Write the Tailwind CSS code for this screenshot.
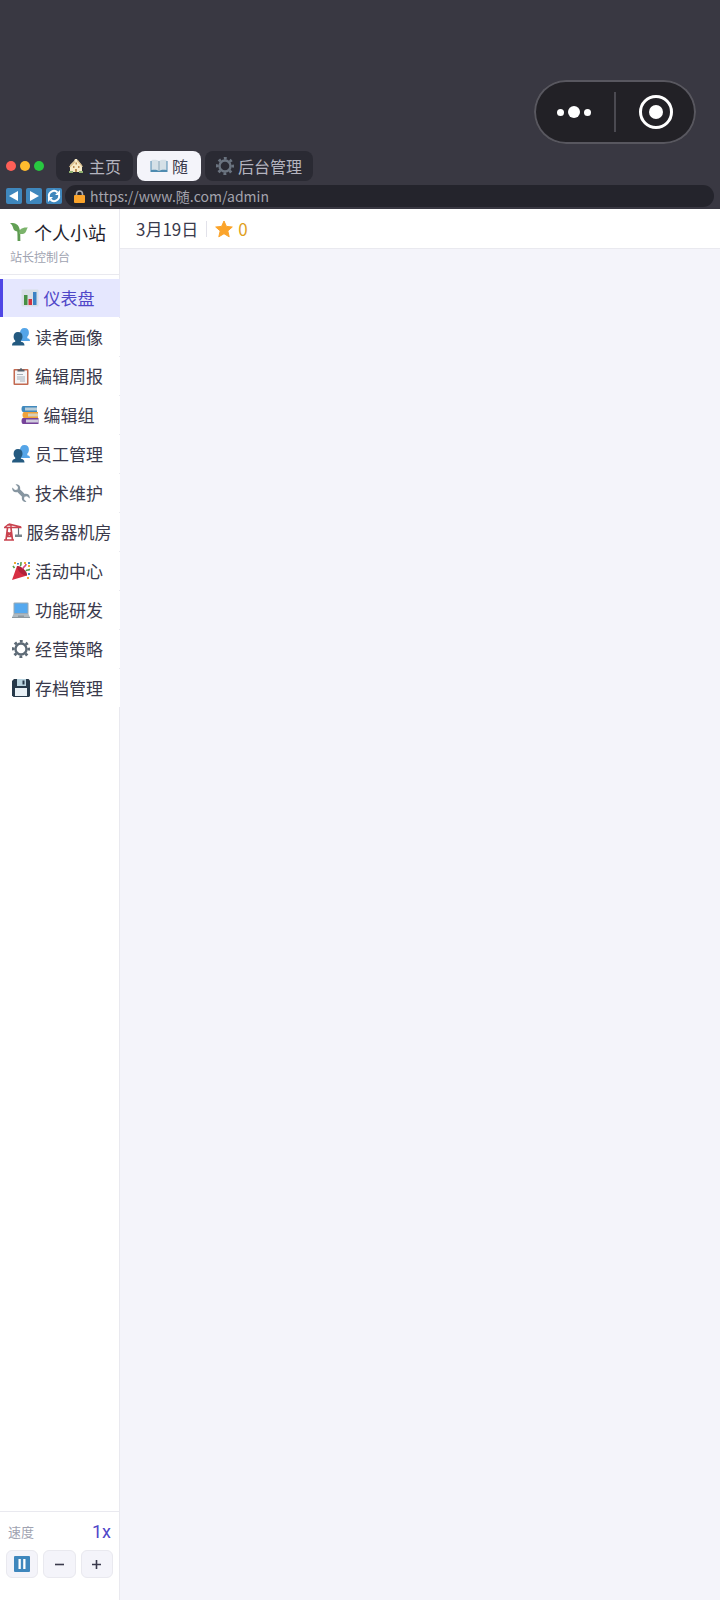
<!DOCTYPE html>
<html lang="zh-CN">
<head>
    <meta charset="UTF-8">
    <meta name="viewport" content="width=device-width, initial-scale=1.0">
    <title>个人小站 - 站长控制台</title>
    <script src="https://cdn.jsdelivr.net/npm/@tailwindcss/browser@4"></script>
</head>
<body class="flex min-h-screen flex-col bg-[#f4f4fa] font-['Noto_Sans_CJK_SC',sans-serif] text-[17px] text-[#3a3a4c]">
    <!-- Shared icons -->
    <svg class="hidden" aria-hidden="true">
        <symbol id="gear" viewBox="0 0 18 18">
            <g fill="none" stroke="currentColor">
                <circle cx="9" cy="9" r="5.500" stroke-width="2.400"/>
                <circle cx="9" cy="9" r="7.700" stroke-width="2.600" stroke-dasharray="2.8 3.247" transform="rotate(-10 9 9)"/>
            </g>
        </symbol>
        <symbol id="people" viewBox="0 0 18 18">
            <path fill="#55a5e8" d="M12.500 0c3 0 4.500 2 4.400 4.800 0 2-.8 3.200-1.600 4v1.400c1.500.3 2.700.9 2.700 2.800H8V5C8 2 9.500 0 12.500 0z"/>
            <path fill="#245a80" d="M6 4c3 0 4.600 2 4.500 4.700 0 1.900-.8 3-1.600 3.900v1.200c1.900.4 3.600 1 3.600 3.700H0c0-2.600 1.300-3.300 3.200-3.800v-1.100C2.200 11.700 1.600 10.500 1.600 8.700 1.600 6 3.200 4 6 4z"/>
        </symbol>
    </svg>

    <!-- Browser chrome -->
    <header class="flex flex-col bg-[#393842] px-[6px] pb-[2px]">
        <div class="flex justify-end pt-20 pr-[18px]">
            <div class="flex h-16 w-[162px] items-center rounded-full bg-[#222126] ring-2 ring-[#58575f] ring-inset">
                <button class="flex flex-1 items-center justify-center gap-1" aria-label="更多">
                    <span class="size-[7px] rounded-full bg-white"></span>
                    <span class="size-3 rounded-full bg-white"></span>
                    <span class="size-[7px] rounded-full bg-white"></span>
                </button>
                <span class="h-10 w-[2px] bg-[#4b4a51]"></span>
                <button class="flex flex-1 items-center justify-center" aria-label="关闭">
                    <span class="flex size-[34px] items-center justify-center rounded-full border-[3px] border-white">
                        <span class="size-[14px] rounded-full bg-white"></span>
                    </span>
                </button>
            </div>
        </div>
        <div class="mt-[7px] flex items-center gap-1 text-[16px] leading-[30px] text-[#b4b4bf]">
            <div class="mr-2 flex gap-1">
                <span class="size-[10px] rounded-full bg-[#fe5f57]"></span>
                <span class="size-[10px] rounded-full bg-[#febb2e]"></span>
                <span class="size-[10px] rounded-full bg-[#28c840]"></span>
            </div>
            <button class="flex items-center gap-[5px] rounded-lg bg-[#2a2a33] px-3">
                <svg class="size-4" viewBox="0 0 16 16" aria-hidden="true">
                    <path fill="#f7ebc8" d="M2 7l4-4 1-2h2l1 2 3 3 1 2v6H2z"/>
                    <path fill="#d8bd8c" d="M1 8.500L6.500 3l1 1L2 9.500zM9 3l1-1 5 6.500-1 .5z"/>
                    <path fill="#b98b55" d="M7.500 4.500H9v2H7.500zM5 8h1.500v2H5zM10 8h1.500v2H10zM7 11h2v3H7z"/>
                    <path fill="#8fb070" d="M1 13h4v2H1zM11 13h4v2h-4z"/>
                </svg>
                主页
            </button>
            <button class="flex items-center gap-1 rounded-lg bg-[#f4f4fa] px-[13px] text-[#3a3a4c]">
                <svg class="h-4 w-[18px]" viewBox="0 0 18 16" aria-hidden="true">
                    <path fill="#4e8bb0" d="M.5 3h17v11H.5z"/>
                    <path fill="#d5e0e7" d="M1.500 2c3.500-.6 5.500-.3 7.500 1 2-1.300 4-1.600 7.500-1v10c-3.500-.5-5.500-.2-7.500 1-2-1.200-4-1.500-7.500-1z"/>
                    <path fill="none" stroke="#8aa6b8" d="M9 3v10"/>
                </svg>
                随
            </button>
            <button class="flex items-center gap-1 rounded-lg bg-[#2a2a33] px-[11px]">
                <svg class="size-[18px] text-[#6b7480]" aria-hidden="true"><use href="#gear"/></svg>
                后台管理
            </button>
        </div>
        <div class="mt-1 flex items-center">
            <div class="flex w-[59px] gap-1">
                <button class="size-4 rounded-xs bg-[#3f87bd]" aria-label="后退">
                    <svg class="size-4" viewBox="0 0 16 16"><path fill="#fff" d="M3 8l9-5v10z"/></svg>
                </button>
                <button class="size-4 rounded-xs bg-[#3f87bd]" aria-label="前进">
                    <svg class="size-4" viewBox="0 0 16 16"><path fill="#fff" d="M13 8L4 3v10z"/></svg>
                </button>
                <button class="size-4 rounded-xs bg-[#3f87bd]" aria-label="刷新">
                    <svg class="size-4" viewBox="0 0 16 16">
                        <path fill="none" stroke="#fff" stroke-width="2" d="M3 9A5 5 0 0 1 11.500 4.500M13 7A5 5 0 0 1 4.500 11.500"/>
                        <path fill="#fff" d="M9 7h5V2zM7 9H2v5z"/>
                    </svg>
                </button>
            </div>
            <div class="flex h-[22px] flex-1 items-center gap-[5px] rounded-full bg-[#24242c] pl-[9px]">
                <svg class="h-[13px] w-[11px]" viewBox="0 0 11 13" aria-hidden="true">
                    <path fill="none" stroke="#a9a9ad" stroke-width="1.600" d="M2.500 6V4a3 3 0 0 1 6 0v2"/>
                    <rect y="5" width="11" height="8" rx="1" fill="#fba42b"/>
                </svg>
                <input type="text" value="https://www.随.com/admin" aria-label="地址" class="min-w-0 flex-1 bg-transparent text-[14px] leading-[22px] text-[#a3a3ad] outline-none">
            </div>
        </div>
    </header>

    <div class="flex flex-1">
        <!-- Sidebar -->
        <aside class="flex w-[120px] shrink-0 flex-col border-r border-[#e9e9ef] bg-white">
            <div class="border-b border-[#e9e9ef] px-[10px] pt-[11px] pb-2">
                <h1 class="flex items-center gap-[6px] text-[18px] leading-6 whitespace-nowrap text-[#1f1f2e]">
                    <svg class="size-[18px] shrink-0" viewBox="0 0 18 18" aria-hidden="true">
                        <path fill="none" stroke="#5d9a51" stroke-width="2.800" d="M9 18c-.3-4 .2-7-.5-10.500"/>
                        <path fill="#62a054" d="M0 0c6-.5 9.500 2 10 8.500-4.500.5-6.500-1-7-4C2.500 2.500 1.500 1.500 0 0z"/>
                        <path fill="#7bb36b" d="M9 11c0-5 3-7 9-6.500-1.500 1-1.500 6-5 6.500-1.500.2-3 0-4 0z"/>
                    </svg>
                    个人小站
                </h1>
                <p class="mt-1 text-[12px] leading-[18px] text-[#a0a3b1]">站长控制台</p>
            </div>
            <nav class="-mr-px mt-1 flex flex-1 flex-col gap-px leading-[38px] whitespace-nowrap">
                <a href="#" class="flex h-[38px] items-center justify-center gap-[5px] border-l-[3px] border-[#4f46e5] bg-[#e5e7fe] pr-2 text-[#4f46c8]">
                    <svg class="size-[18px] shrink-0" viewBox="0 0 18 18" aria-hidden="true">
                        <rect x=".5" y=".5" width="17" height="17" rx="1" fill="#d8dfe6"/>
                        <path fill="#469044" d="M3 6h3.500v10H3z"/><path fill="#d3343f" d="M7.500 10H11v6H7.500z"/><path fill="#3b82c4" d="M12 3h3.500v13H12z"/>
                    </svg>
                    仪表盘
                </a>
                <a href="#" class="flex h-[38px] items-center justify-center gap-[5px] border-l-[3px] border-white bg-white pr-2">
                    <svg class="size-[18px] shrink-0" aria-hidden="true"><use href="#people"/></svg>
                    读者画像
                </a>
                <a href="#" class="flex h-[38px] items-center justify-center gap-[5px] border-l-[3px] border-white bg-white pr-2">
                    <svg class="size-[18px] shrink-0" viewBox="0 0 18 18" aria-hidden="true">
                        <rect x="1.500" y="2" width="15" height="16" rx="1" fill="#c36a51"/>
                        <path fill="#f4f5f7" d="M3 3.500h12v13H3z"/>
                        <path fill="#56616b" d="M5.500 4.500v-2h2.300a1.200 1.200 0 0 1 2.400 0h2.300v2z"/>
                        <path stroke="#a7b1ba" d="M5 7.500h6M5 10h8M5 12h8M8 14h5"/>
                    </svg>
                    编辑周报
                </a>
                <a href="#" class="flex h-[38px] items-center justify-center gap-[5px] border-l-[3px] border-white bg-white pr-2">
                    <svg class="size-[18px] shrink-0" viewBox="0 0 18 18" aria-hidden="true">
                        <path fill="#4089bd" d="M2 0h14v6H2C0 6 0 0 2 0z"/><path fill="#b9cdd8" d="M4 1.500h12v3H4z"/>
                        <path fill="#f0a23a" d="M3 6h14v6H3c-2 0-2-6 0-6z"/><path fill="#d9cfb4" d="M7 7.500h10v3H7z"/>
                        <path fill="#76439a" d="M2 12h15.500v6H2c-2 0-2-6 0-6z"/><path fill="#cfcbdc" d="M5 13.500h12.500v3H5z"/>
                    </svg>
                    编辑组
                </a>
                <a href="#" class="flex h-[38px] items-center justify-center gap-[5px] border-l-[3px] border-white bg-white pr-2">
                    <svg class="size-[18px] shrink-0" aria-hidden="true"><use href="#people"/></svg>
                    员工管理
                </a>
                <a href="#" class="flex h-[38px] items-center justify-center gap-[5px] border-l-[3px] border-white bg-white pr-2">
                    <svg class="size-[18px] shrink-0" viewBox="0 0 18 18" aria-hidden="true">
                        <path fill="#8796a1" d="M3.500.3C6.500-.3 9 2.300 8 5.300l4.700 4.700c3-1 5.600 1.500 5 4.500l-2.700-2.300-2.600.5-.4 2.500 2.500 2.600c-3 .6-5.500-2-4.500-5L5.300 8.100c-3 1-5.700-1.500-5-4.600L3 6l2.500-.5L6 3z"/>
                    </svg>
                    技术维护
                </a>
                <a href="#" class="flex h-[38px] items-center justify-center gap-[5px] border-l-[3px] border-white bg-white pr-2">
                    <svg class="size-[18px] shrink-0" viewBox="0 0 18 18" aria-hidden="true">
                        <path fill="none" stroke="#c9434f" stroke-width="1.700" d="M3.500 5L2 17M7 5l1.500 12M3 9l5 4M7.500 9l-5 4M2 13.500h6.500M0 17h10"/>
                        <path fill="none" stroke="#c9434f" stroke-width="1.400" d="M0 4.500h17.500M5 1l12 3M5 1L1 4M3 2h4v3"/>
                        <path fill="none" stroke="#66717a" stroke-width="1.200" d="M14.500 5v7"/>
                        <path fill="#7b868e" d="M11 11.500h7V14h-7z"/>
                    </svg>
                    服务器机房
                </a>
                <a href="#" class="flex h-[38px] items-center justify-center gap-[5px] border-l-[3px] border-white bg-white pr-2">
                    <svg class="size-[18px] shrink-0" viewBox="0 0 18 18" aria-hidden="true">
                        <path fill="#d72f43" d="M5 4c5 1 9 5 10 9.500L0 18z"/>
                        <path fill="#b02339" d="M5 4c4-.5 11 6 10 9.500-5 0-10-5-10-9.500z"/>
                        <path fill="none" stroke="#559b4b" stroke-width="1.600" d="M8 4c2-1 0-3 1.500-4M14 9c1-2 2.500 0 4-2M1 4l1.500 2"/>
                        <path fill="none" stroke="#d14c85" stroke-width="1.600" d="M11 7c0-3 3-2 3-5"/>
                        <path fill="#edaa35" d="M2 0h2v2H2zM16 3h2v2h-2zM12 0h2v2h-2zM15 15h2v2h-2z"/>
                        <path fill="#438cc7" d="M5 1h2v1.500H5zM16 0h2v2h-2zM16 11h2v2h-2z"/>
                    </svg>
                    活动中心
                </a>
                <a href="#" class="flex h-[38px] items-center justify-center gap-[5px] border-l-[3px] border-white bg-white pr-2">
                    <svg class="size-[18px] shrink-0" viewBox="0 0 18 18" aria-hidden="true">
                        <rect x="1.500" y="1.500" width="15" height="12" rx="1" fill="#9aa9b4"/>
                        <path fill="#55a9ef" d="M2.500 2.500h13V12h-13z"/>
                        <path fill="#afb9c0" d="M1.500 13h15l1.500 3.500H0z"/>
                        <path fill="#8d989f" d="M0 16h18v1H0zM6 14.500h6V16H6z"/>
                    </svg>
                    功能研发
                </a>
                <a href="#" class="flex h-[38px] items-center justify-center gap-[5px] border-l-[3px] border-white bg-white pr-2">
                    <svg class="size-[18px] shrink-0 text-[#5d6a76]" aria-hidden="true"><use href="#gear"/></svg>
                    经营策略
                </a>
                <a href="#" class="flex h-[38px] items-center justify-center gap-[5px] border-l-[3px] border-white bg-white pr-2">
                    <svg class="size-[18px] shrink-0" viewBox="0 0 18 18" aria-hidden="true">
                        <path fill="#26394a" d="M2 0h14.500L18 1.500V17l-1 1H1.500L0 16.500V2z"/>
                        <path fill="#b9d3df" d="M5 0h9v7H5z"/><path fill="#26394a" d="M10.500 1.500h2v4h-2z"/>
                        <path fill="#e8f0f5" d="M3 9h12v8H3z"/>
                    </svg>
                    存档管理
                </a>
            </nav>
            <div class="border-t border-[#e9e9ef] px-[6px] pt-2 pb-[22px]">
                <div class="flex items-center justify-between px-[2px] leading-6">
                    <span class="text-[13px] text-[#a0a3b1]">速度</span>
                    <span class="font-[Roboto,sans-serif] text-[18px] text-[#4f46c8]">1x</span>
                </div>
                <div class="mt-[6px] flex gap-[5px]">
                    <button class="flex h-7 w-[33px] items-center justify-center rounded-md border border-[#e9e9ef] bg-[#f4f4fa]" aria-label="暂停">
                        <svg class="size-4" viewBox="0 0 16 16"><rect width="16" height="16" rx="1" fill="#3f87bd"/><path fill="#fff" d="M4.500 3h2.300v10H4.500zM9.200 3h2.300v10H9.200z"/></svg>
                    </button>
                    <button class="flex h-7 w-[33px] items-center justify-center rounded-md border border-[#e9e9ef] bg-[#f4f4fa]" aria-label="减速">
                        <svg class="size-[9px]" viewBox="0 0 9 9"><path stroke="#3a3a4c" stroke-width="1.600" d="M0 4.500h9"/></svg>
                    </button>
                    <button class="flex h-7 w-[33px] items-center justify-center rounded-md border border-[#e9e9ef] bg-[#f4f4fa]" aria-label="加速">
                        <svg class="size-[9px]" viewBox="0 0 9 9"><path stroke="#3a3a4c" stroke-width="1.600" d="M0 4.500h9M4.500 0v9"/></svg>
                    </button>
                </div>
            </div>
        </aside>

        <!-- Content -->
        <main class="flex-1">
            <div class="flex h-10 items-center border-b border-[#e9e9ef] bg-white px-4">
                <span>3月19日</span>
                <span class="mx-2 h-4 w-px bg-[#e2e2ea]"></span>
                <span class="flex items-center gap-[5px] text-[#e0a01c]">
                    <svg class="size-[18px]" viewBox="0 0 18 18" aria-hidden="true"><path fill="#fba42b" stroke="#fba42b" stroke-linejoin="round" d="M9 1l2.400 5.400 5.900.6-4.500 3.900 1.400 5.900L9 13.700l-5.200 3.100 1.400-5.900L.7 7l5.900-.6z"/></svg>
                    0
                </span>
            </div>
        </main>
    </div>
</body>
</html>
